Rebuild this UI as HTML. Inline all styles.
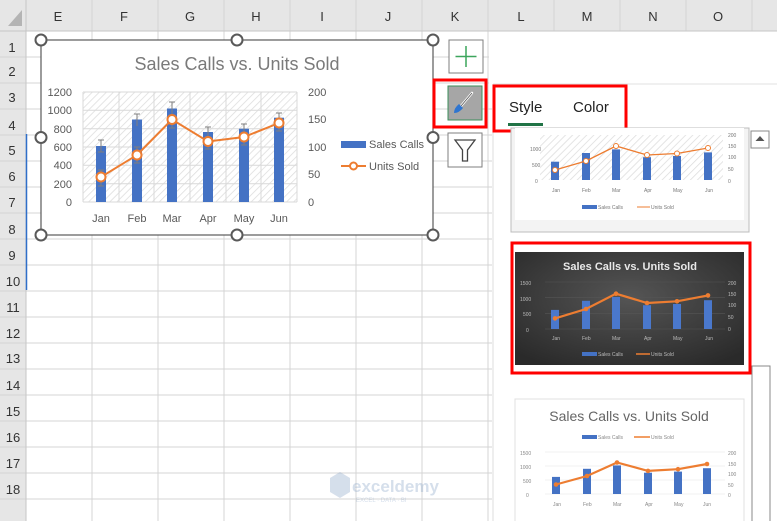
<!DOCTYPE html>
<html><head><meta charset="utf-8"><style>
body{margin:0;width:777px;height:521px;overflow:hidden;background:#fff;font-family:"Liberation Sans",Arial,sans-serif}
svg{display:block}
text{font-family:"Liberation Sans",Arial,sans-serif}
</style></head><body>
<svg width="777" height="521" viewBox="0 0 777 521" xmlns="http://www.w3.org/2000/svg">
<defs>
<pattern id="hat" width="5" height="5" patternUnits="userSpaceOnUse" patternTransform="rotate(45)">
<rect width="5" height="5" fill="#fff"/><line x1="0" y1="0" x2="0" y2="5" stroke="#dcdcdc" stroke-width="1.5"/></pattern>
<radialGradient id="dk" cx="50%" cy="40%" r="70%"><stop offset="0" stop-color="#555"/><stop offset="1" stop-color="#2a2a2a"/></radialGradient>
</defs>
<rect x="0" y="0" width="777" height="31" fill="#e6e6e6"/>
<rect x="0" y="0" width="26" height="521" fill="#e6e6e6"/>
<polygon points="22,10 22,26 8,26" fill="#b4b4b4"/>
<g stroke="#d4d4d4" stroke-width="1">
<line x1="92" y1="0" x2="92" y2="521"/><line x1="158" y1="0" x2="158" y2="521"/><line x1="224" y1="0" x2="224" y2="521"/><line x1="290" y1="0" x2="290" y2="521"/><line x1="356" y1="0" x2="356" y2="521"/><line x1="422" y1="0" x2="422" y2="521"/><line x1="488" y1="0" x2="488" y2="521"/><line x1="554" y1="0" x2="554" y2="31"/><line x1="620" y1="0" x2="620" y2="31"/><line x1="686" y1="0" x2="686" y2="31"/><line x1="752" y1="0" x2="752" y2="31"/>
<line x1="0" y1="57" x2="777" y2="57"/><line x1="0" y1="83" x2="777" y2="83"/><line x1="0" y1="109" x2="777" y2="109"/><line x1="0" y1="135" x2="777" y2="135"/><line x1="0" y1="161" x2="777" y2="161"/><line x1="0" y1="187" x2="777" y2="187"/><line x1="0" y1="213" x2="777" y2="213"/><line x1="0" y1="239" x2="777" y2="239"/><line x1="0" y1="265" x2="777" y2="265"/><line x1="0" y1="291" x2="777" y2="291"/><line x1="0" y1="317" x2="777" y2="317"/><line x1="0" y1="343" x2="777" y2="343"/><line x1="0" y1="369" x2="777" y2="369"/><line x1="0" y1="395" x2="777" y2="395"/><line x1="0" y1="421" x2="777" y2="421"/><line x1="0" y1="447" x2="777" y2="447"/><line x1="0" y1="473" x2="777" y2="473"/><line x1="0" y1="499" x2="777" y2="499"/>
</g>
<rect x="489" y="32" width="288" height="52" fill="#fff"/>
<line x1="0" y1="31" x2="777" y2="31" stroke="#c6c6c6"/><line x1="26" y1="0" x2="26" y2="521" stroke="#c6c6c6"/>
<line x1="26.5" y1="134" x2="26.5" y2="290" stroke="#2f6fc9" stroke-width="1.5"/>
<g font-size="13" fill="#333" text-anchor="middle">
<text x="58" y="21">E</text><text x="124" y="21">F</text><text x="190" y="21">G</text><text x="256" y="21">H</text><text x="322" y="21">I</text><text x="388" y="21">J</text><text x="455" y="21">K</text><text x="521" y="21">L</text><text x="587" y="21">M</text><text x="653" y="21">N</text><text x="718" y="21">O</text>
<text x="12" y="52">1</text><text x="12" y="76">2</text><text x="12" y="102">3</text><text x="12" y="130">4</text><text x="12" y="155">5</text><text x="12" y="181">6</text><text x="12" y="207">7</text><text x="12" y="234">8</text><text x="12" y="260">9</text><text x="13" y="286">10</text><text x="13" y="312">11</text><text x="13" y="338">12</text><text x="13" y="363">13</text><text x="13" y="390">14</text><text x="13" y="416">15</text><text x="13" y="442">16</text><text x="13" y="468">17</text><text x="13" y="494">18</text>
</g>
<rect x="41" y="40" width="392" height="195" fill="#fff" stroke="#595959" stroke-width="1.2"/>
<text x="237" y="70" font-size="18" fill="#7a7a7a" text-anchor="middle">Sales Calls vs. Units Sold</text>
<rect x="83" y="92" width="214" height="110" fill="url(#hat)"/>
<g stroke="#d9d9d9" stroke-width="1">
<line x1="83" y1="92" x2="297" y2="92"/><line x1="83" y1="110.3" x2="297" y2="110.3"/><line x1="83" y1="128.7" x2="297" y2="128.7"/><line x1="83" y1="147" x2="297" y2="147"/><line x1="83" y1="165.3" x2="297" y2="165.3"/><line x1="83" y1="183.7" x2="297" y2="183.7"/><line x1="83" y1="202" x2="297" y2="202"/>
<line x1="83" y1="92" x2="83" y2="202"/><line x1="119" y1="92" x2="119" y2="202"/><line x1="154" y1="92" x2="154" y2="202"/><line x1="190" y1="92" x2="190" y2="202"/><line x1="226" y1="92" x2="226" y2="202"/><line x1="261" y1="92" x2="261" y2="202"/><line x1="297" y1="92" x2="297" y2="202"/>
</g>
<g fill="#4472c4">
<rect x="96" y="146" width="10" height="56"/><rect x="132" y="119.5" width="10" height="82.5"/><rect x="167" y="108.5" width="10" height="93.5"/><rect x="203" y="132" width="10" height="70"/><rect x="239" y="128.7" width="10" height="73.3"/><rect x="274" y="117.7" width="10" height="84.3"/>
</g>
<g stroke="#7f7f7f" stroke-width="1" fill="none">
<path d="M101 140v12M98 140h6M98 152h6M137 114v12M134 114h6M172 102v13M169 102h6M208 127v10M205 127h6M244 124v10M241 124h6M279 113v10M276 113h6"/>
<path d="M101 170v16M98 170h6M98 186h6M137 147v16M134 147h6M134 163h6M172 112v16M169 128h6M208 134v15M205 149h6M244 130v15M241 145h6M279 116v15M276 131h6"/>
</g>
<polyline points="101,177 137,155 172,119.5 208,141.5 244,137 279,123" fill="none" stroke="#ed7d31" stroke-width="2"/>
<g fill="#fff" stroke="#ed7d31" stroke-width="2">
<circle cx="101" cy="177" r="4.5"/><circle cx="137" cy="155" r="4.5"/><circle cx="172" cy="119.5" r="4.5"/><circle cx="208" cy="141.5" r="4.5"/><circle cx="244" cy="137" r="4.5"/><circle cx="279" cy="123" r="4.5"/>
</g>
<g font-size="11" fill="#595959" text-anchor="end">
<text x="72" y="96">1200</text><text x="72" y="114">1000</text><text x="72" y="133">800</text><text x="72" y="151">600</text><text x="72" y="169">400</text><text x="72" y="188">200</text><text x="72" y="206">0</text>
</g>
<g font-size="11" fill="#595959">
<text x="308" y="96">200</text><text x="308" y="123">150</text><text x="308" y="151">100</text><text x="308" y="178">50</text><text x="308" y="206">0</text>
</g>
<g font-size="11" fill="#595959" text-anchor="middle">
<text x="101" y="222">Jan</text><text x="137" y="222">Feb</text><text x="172" y="222">Mar</text><text x="208" y="222">Apr</text><text x="244" y="222">May</text><text x="279" y="222">Jun</text>
</g>
<rect x="341" y="141" width="25" height="7" fill="#4472c4"/>
<text x="369" y="148" font-size="11" fill="#595959">Sales Calls</text>
<line x1="341" y1="166" x2="366" y2="166" stroke="#ed7d31" stroke-width="2"/><circle cx="353.5" cy="166" r="3.5" fill="#fff" stroke="#ed7d31" stroke-width="2"/>
<text x="369" y="170" font-size="11" fill="#595959">Units Sold</text>
<g fill="#fff" stroke="#595959" stroke-width="2">
<circle cx="41" cy="40" r="5.5"/><circle cx="237" cy="40" r="5.5"/><circle cx="433" cy="40" r="5.5"/><circle cx="41" cy="137.5" r="5.5"/><circle cx="433" cy="137.5" r="5.5"/><circle cx="41" cy="235" r="5.5"/><circle cx="237" cy="235" r="5.5"/><circle cx="433" cy="235" r="5.5"/>
</g>
<rect x="449" y="40" width="34" height="33" fill="#fff" stroke="#7f7f7f"/>
<path d="M466 46v21M455.5 56.5h21" stroke="#3ca55c" stroke-width="1.5"/>
<rect x="434" y="80" width="52" height="47" fill="none" stroke="#f00" stroke-width="3"/>
<rect x="448" y="86" width="34" height="34" fill="#a6a6a6" stroke="#3b8e5a"/>
<path d="M472 93 L461 106" stroke="#fff" stroke-width="2.5" stroke-linecap="round"/>
<path d="M472 93 L461 106" stroke="#555" stroke-width="0.8"/>
<path d="M459 104 Q454 108 454 113 Q459 113 463 108 Z" fill="#2e75d0"/>
<rect x="448" y="133" width="34" height="34" fill="#fff" stroke="#7f7f7f"/>
<path d="M455 140h20l-7.5 10v11h-5v-11z" fill="none" stroke="#444" stroke-width="1.3"/>
<rect x="492" y="84" width="285" height="437" fill="#fff"/>
<line x1="493" y1="84" x2="493" y2="521" stroke="#dcdcdc"/>
<line x1="493" y1="84" x2="777" y2="84" stroke="#e0e0e0"/>
<rect x="494" y="86" width="132" height="45" fill="none" stroke="#f00" stroke-width="3"/>
<text x="509" y="112" font-size="15" fill="#222">Style</text>
<text x="573" y="112" font-size="15" fill="#222">Color</text>
<rect x="508" y="123" width="35" height="3" fill="#217346"/>
<rect x="751" y="131" width="18" height="17" fill="#fff" stroke="#888"/>
<polygon points="760,136 755.5,141 764.5,141" fill="#555"/>
<rect x="752" y="366" width="18" height="160" fill="#fff" stroke="#888"/>
<rect x="511" y="128" width="238" height="104" fill="#f3f3f3" stroke="#bdbdbd"/>
<rect x="515" y="128" width="229" height="92" fill="#fff"/>
<rect x="540" y="135" width="183" height="45" fill="url(#hat)"/>
<g fill="#4472c4"><rect x="551" y="161.7" width="8" height="18.3"/><rect x="582" y="153" width="8" height="27"/><rect x="612" y="149.4" width="8" height="30.6"/><rect x="643" y="157.2" width="8" height="22.8"/><rect x="673" y="156" width="8" height="24"/><rect x="704" y="152.4" width="8" height="27.6"/></g>
<polyline points="555,170 586,161 616,146 647,155 677,153.5 708,148" fill="none" stroke="#ed7d31" stroke-width="1.3"/>
<g fill="#fff" stroke="#ed7d31"><circle cx="555" cy="170" r="2.5"/><circle cx="586" cy="161" r="2.5"/><circle cx="616" cy="146" r="2.5"/><circle cx="647" cy="155" r="2.5"/><circle cx="677" cy="153.5" r="2.5"/><circle cx="708" cy="148" r="2.5"/></g>
<g font-size="5" fill="#777"><text x="530" y="151">1000</text><text x="532" y="167">500</text><text x="535" y="183">0</text><text x="728" y="137">200</text><text x="728" y="148">150</text><text x="728" y="159">100</text><text x="728" y="171">50</text><text x="728" y="183">0</text>
<text x="552" y="192">Jan</text><text x="582" y="192">Feb</text><text x="612" y="192">Mar</text><text x="644" y="192">Apr</text><text x="673" y="192">May</text><text x="705" y="192">Jun</text>
<text x="598" y="209">Sales Calls</text><text x="651" y="209">Units Sold</text></g>
<rect x="582" y="205" width="15" height="4" fill="#4472c4"/><line x1="637" y1="207" x2="650" y2="207" stroke="#ed7d31"/>
<rect x="512" y="243" width="238" height="130" fill="none" stroke="#f00" stroke-width="3"/>
<rect x="515" y="252" width="229" height="113" fill="url(#dk)"/>
<text x="630" y="270" font-size="11" font-weight="bold" fill="#e8e8e8" text-anchor="middle">Sales Calls vs. Units Sold</text>
<g stroke="#555" stroke-width="0.6"><line x1="545" y1="282" x2="725" y2="282"/><line x1="545" y1="297.7" x2="725" y2="297.7"/><line x1="545" y1="313.3" x2="725" y2="313.3"/><line x1="545" y1="329" x2="725" y2="329"/></g>
<g fill="#4a78cc"><rect x="551" y="309.9" width="8" height="19.1"/><rect x="582" y="300.8" width="8" height="28.2"/><rect x="612" y="297" width="8" height="32"/><rect x="643" y="305.2" width="8" height="23.8"/><rect x="673" y="304" width="8" height="25"/><rect x="704" y="300.2" width="8" height="28.8"/></g>
<polyline points="555,318.4 586,309 616,293.7 647,303 677,301.3 708,295.4" fill="none" stroke="#ed7d31" stroke-width="2.2"/>
<g fill="#ed7d31"><circle cx="555" cy="318.4" r="2.3"/><circle cx="586" cy="309" r="2.3"/><circle cx="616" cy="293.7" r="2.3"/><circle cx="647" cy="303" r="2.3"/><circle cx="677" cy="301.3" r="2.3"/><circle cx="708" cy="295.4" r="2.3"/></g>
<g font-size="5" fill="#bbb"><text x="520" y="285">1500</text><text x="520" y="301">1000</text><text x="523" y="316">500</text><text x="526" y="332">0</text><text x="728" y="285">200</text><text x="728" y="296">150</text><text x="728" y="307">100</text><text x="728" y="319">50</text><text x="728" y="331">0</text>
<text x="552" y="340">Jan</text><text x="582" y="340">Feb</text><text x="612" y="340">Mar</text><text x="644" y="340">Apr</text><text x="673" y="340">May</text><text x="705" y="340">Jun</text>
<text x="598" y="356">Sales Calls</text><text x="651" y="356">Units Sold</text></g>
<rect x="582" y="352" width="15" height="4" fill="#4472c4"/><line x1="636" y1="354" x2="650" y2="354" stroke="#ed7d31" stroke-width="1.5"/>
<rect x="515" y="399" width="229" height="125" fill="#fff" stroke="#e0e0e0"/>
<text x="629" y="421" font-size="14" fill="#666" text-anchor="middle">Sales Calls vs. Units Sold</text>
<rect x="582" y="435" width="15" height="4" fill="#4472c4"/><line x1="634" y1="437" x2="650" y2="437" stroke="#ed7d31" stroke-width="1.5"/>
<g stroke="#e6e6e6" stroke-width="0.6"><line x1="545" y1="452" x2="725" y2="452"/><line x1="545" y1="466" x2="725" y2="466"/><line x1="545" y1="480" x2="725" y2="480"/><line x1="545" y1="494" x2="725" y2="494"/></g>
<g fill="#4472c4"><rect x="552" y="476.9" width="8" height="17.1"/><rect x="583" y="468.8" width="8" height="25.2"/><rect x="613" y="465.4" width="8" height="28.6"/><rect x="644" y="472.7" width="8" height="21.3"/><rect x="674" y="471.6" width="8" height="22.4"/><rect x="703" y="468.2" width="8" height="25.8"/></g>
<polyline points="556,484.5 587,476 617,462.5 648,470.9 678,469.2 707,464" fill="none" stroke="#ed7d31" stroke-width="2.2"/>
<g fill="#ed7d31"><circle cx="556" cy="484.5" r="2.3"/><circle cx="587" cy="476" r="2.3"/><circle cx="617" cy="462.5" r="2.3"/><circle cx="648" cy="470.9" r="2.3"/><circle cx="678" cy="469.2" r="2.3"/><circle cx="707" cy="464" r="2.3"/></g>
<g font-size="5" fill="#888"><text x="598" y="439">Sales Calls</text><text x="651" y="439">Units Sold</text>
<text x="520" y="455">1500</text><text x="520" y="469">1000</text><text x="523" y="483">500</text><text x="526" y="497">0</text><text x="728" y="455">200</text><text x="728" y="466">150</text><text x="728" y="476">100</text><text x="728" y="487">50</text><text x="728" y="497">0</text>
<text x="553" y="506">Jan</text><text x="583" y="506">Feb</text><text x="613" y="506">Mar</text><text x="645" y="506">Apr</text><text x="674" y="506">May</text><text x="703" y="506">Jun</text></g>
<g opacity="0.35"><polygon points="330,478 340,472 350,478 350,492 340,498 330,492" fill="#8aa4c8"/>
<text x="352" y="492" font-size="17" font-weight="bold" fill="#8aa4c8">exceldemy</text>
<text x="356" y="502" font-size="6" fill="#8aa4c8">EXCEL · DATA · BI</text></g>
</svg>
</body></html>
